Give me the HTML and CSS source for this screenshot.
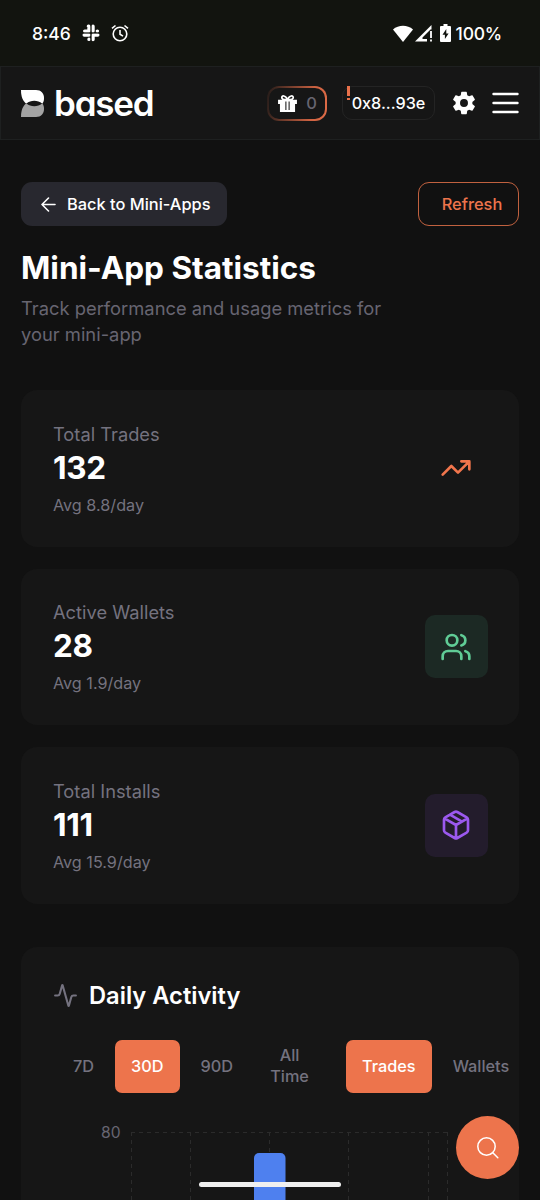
FILE: index.html
```html
<!DOCTYPE html>
<html lang="en">

<head>
    <meta charset="UTF-8">
    <meta name="viewport" content="width=device-width, initial-scale=1.0">
    <title>Mini-App Statistics</title>
    <link rel="stylesheet" href="styles.css">
</head>

<body>
    <div class="status-bar">
        <span class="time">8:46</span>
        <svg class="slack" width="18" height="18" viewBox="0 0 18 18" fill="none" stroke="#fff" stroke-width="3.4" stroke-linecap="round">
            <path d="M7 2.7v4.4M2.7 7.1H7M11 2.2v4.9M15.3 7.1h.1M2.2 11H7M2.7 11H7M7 15.3v.1M11 11h4.8M11 11v4.6M6.4 2.2h.4" />
            <path d="M9 1v16M1 9h16" stroke="#12140f" stroke-width="1" />
        </svg>
        <svg class="alarm" width="18" height="18" viewBox="0 0 18 18" fill="none" stroke="#fff" stroke-width="1.6">
            <circle cx="9" cy="10" r="6.8" />
            <path d="M9 6v4.3l3 1.8M1 4.4L4.5 1.5M17 4.4l-3.500-2.900" />
        </svg>
        <div class="status-right">
            <svg width="20" height="17" viewBox="0 0 20 17" fill="#fff">
                <path d="M0 4.500C5.500-.5 14.500-.5 20 4.500L10 17z" />
            </svg>
            <svg width="18" height="17" viewBox="0 0 18 17">
                <path d="M0 16.500L16.500 0v4.500H15.500L7.500 12.500v1.500h4.500v2.500z" fill="#fff" />
                <path d="M16 6v7M16 14.600v2" stroke="#fff" stroke-width="1.800" />
            </svg>
            <svg class="battery" width="11" height="18" viewBox="0 0 11 18">
                <path d="M3.500 0h4v2H10q1 0 1 1v14q0 1-1 1H1q-1 0-1-1V3q0-1 1-1h2.500z" fill="#fff" />
                <path d="M6.300 5L2.500 10.800h2.400V15l3.700-5.600H6.300z" fill="#12140f" />
            </svg>
            <span class="percent">100%</span>
        </div>
    </div>

    <header class="header">
        <div class="logo">
            <svg width="23" height="27" viewBox="0 0 23 27">
                <path d="M0 0H15C20 0 23 3.500 23 8C23 10.500 22.500 12 21.500 13.500H5C2 11 0 7 0 0z" fill="#fff" />
                <path d="M5 13.500H21.500C22.500 15 23 16.500 23 19C23 23.500 20 27 15 27H0C0 20 2 16 5 13.500z" fill="#a3a3a3" />
                <path d="M5.500 13.500C9.500 9.800 17 9.800 21 13.500C17 17 9.500 17 5.500 13.500z" fill="#161616" />
            </svg>
            <span>based</span>
        </div>
        <div class="header-right">
            <div class="gift">
                <svg width="19" height="17" viewBox="0 0 20 18">
                    <path d="M0 5h20v4.500H0zM2 9h16v9H2z" fill="#fff" />
                    <path d="M10 5C8 0 3.500 0 4 3.200Q4.500 5 7 5zM10 5C12 0 16.500 0 16 3.200Q15.500 5 13 5z" fill="none" stroke="#fff" stroke-width="1.800" />
                    <path d="M8.300 7v9M11.700 7v9" stroke="#161616" stroke-width="1.100" />
                </svg>
                <span>0</span>
            </div>
            <div class="wallet">
                <span class="alert"></span>
                <span>0x8...93e</span>
            </div>
            <svg class="gear" width="28" height="28" viewBox="0 0 24 24" fill="#fff">
                <path d="M19.140 12.940c.04-.3.06-.61.06-.94s-.02-.64-.07-.94l2.030-1.580c.18-.14.23-.41.12-.61l-1.920-3.320c-.12-.22-.37-.29-.59-.22l-2.390.96c-.5-.38-1.030-.7-1.620-.94l-.36-2.540c-.04-.24-.24-.41-.48-.41h-3.840c-.24 0-.43.17-.47.41l-.36 2.540c-.59.24-1.130.57-1.620.94l-2.390-.96c-.22-.08-.47 0-.59.22L2.740 8.870c-.12.21-.08.47.12.61l2.030 1.580c-.05.3-.09.63-.09.94s.02.64.07.94l-2.030 1.580c-.18.14-.23.41-.12.61l1.920 3.320c.12.22.37.29.59.22l2.390-.96c.5.38 1.030.7 1.620.94l.36 2.540c.05.24.24.41.48.41h3.840c.24 0 .44-.17.47-.41l.36-2.540c.59-.24 1.130-.56 1.620-.94l2.390.96c.22.08.47 0 .59-.22l1.920-3.320c.12-.22.07-.47-.12-.61zM12 15.400a3.400 3.400 0 1 1 0-6.800 3.400 3.400 0 0 1 0 6.800z" />
            </svg>
            <svg class="menu" width="27" height="22" viewBox="0 0 27 22" stroke="#fff" stroke-width="2.400" stroke-linecap="round">
                <path d="M1.500 2h24M1.500 11h24M1.500 20h24" />
            </svg>
        </div>
    </header>

    <main>
        <div class="actions">
            <button class="back">
                <svg width="15" height="15" viewBox="0 0 15 15" fill="none" stroke="#fff" stroke-width="1.600" stroke-linecap="round" stroke-linejoin="round">
                    <path d="M7.500 1L1 7.500l6.500 6.500M1 7.500h13" />
                </svg>
                <span>Back to Mini-Apps</span>
            </button>
            <button class="refresh">Refresh</button>
        </div>
        <h1>Mini-App Statistics</h1>
        <p class="subtitle">Track performance and usage metrics for your mini-app</p>

        <div class="stats">
            <div class="card">
                <div>
                    <div class="label">Total Trades</div>
                    <div class="value">132</div>
                    <div class="avg">Avg 8.8/day</div>
                </div>
                <div class="icon trades">
                    <svg width="32" height="32" viewBox="0 0 24 24">
                        <path d="M22 7l-8.500 8.500-5-5L2 17M16 7h6v6" />
                    </svg>
                </div>
            </div>
            <div class="card">
                <div>
                    <div class="label">Active Wallets</div>
                    <div class="value">28</div>
                    <div class="avg">Avg 1.9/day</div>
                </div>
                <div class="icon wallets">
                    <svg width="32" height="32" viewBox="0 0 24 24">
                        <path d="M16 21v-2a4 4 0 0 0-4-4H6a4 4 0 0 0-4 4v2M22 21v-2a4 4 0 0 0-3-3.870M16 3.130a4 4 0 0 1 0 7.750" />
                        <circle cx="9" cy="7" r="4" />
                    </svg>
                </div>
            </div>
            <div class="card">
                <div>
                    <div class="label">Total Installs</div>
                    <div class="value">111</div>
                    <div class="avg">Avg 15.9/day</div>
                </div>
                <div class="icon installs">
                    <svg width="32" height="32" viewBox="0 0 24 24">
                        <path d="M11 21.730a2 2 0 0 0 2 0l7-4A2 2 0 0 0 21 16V8a2 2 0 0 0-1-1.730l-7-4a2 2 0 0 0-2 0l-7 4A2 2 0 0 0 3 8v8a2 2 0 0 0 1 1.730zM12 22V12M3.300 7L12 12l8.700-5M7.500 4.270l9 5.150" />
                    </svg>
                </div>
            </div>
        </div>

        <section class="activity">
            <h2>
                <svg width="25" height="25" viewBox="0 0 24 24" fill="none" stroke="#74727f" stroke-width="2" stroke-linecap="round" stroke-linejoin="round">
                    <path d="M22 12h-2.480a2 2 0 0 0-1.930 1.460l-2.350 8.360a.25.25 0 0 1-.48 0L9.240 2.180a.25.25 0 0 0-.48 0l-2.350 8.360A2 2 0 0 1 4.490 12H2" />
                </svg>
                <span>Daily Activity</span>
            </h2>
            <div class="filters">
                <div class="group">
                    <button>7D</button>
                    <button class="active">30D</button>
                    <button>90D</button>
                    <button class="all">All Time</button>
                </div>
                <div class="group">
                    <button class="active">Trades</button>
                    <button>Wallets</button>
                </div>
            </div>
            <div class="chart">
                <span class="tick">80</span>
                <svg width="320" height="69" viewBox="0 0 320 69">
                    <path class="grid" d="M1 1.500h317M1.500 1v68M60.500 1v68M139.500 1v68M218.500 1v68M298.500 1v68M317.500 1v68" />
                    <rect x="124" y="22" width="31.500" height="60" rx="5" fill="#4e80ef" />
                </svg>
            </div>
        </section>
    </main>

    <button class="search">
        <svg width="24" height="24" viewBox="0 0 24 24" fill="none" stroke="#fff" stroke-width="1.500" stroke-linecap="round">
            <circle cx="10.500" cy="10.500" r="8.700" />
            <path d="M16.800 16.800l5 5" />
        </svg>
    </button>
    <div class="home-bar"></div>
</body>

</html>
```
FILE: styles.css
```css
* {
    box-sizing: border-box;
}

body {
    margin: 0;
    height: 1200px;
    overflow: hidden;
    position: relative;
    background-color: #111111;
    color: #fff;
    font-family: Inter, "Liberation Sans", sans-serif;
}

svg {
    display: block;
    flex-shrink: 0;
}

button {
    border: 0;
    padding: 0;
    background: none;
    color: inherit;
    font-family: inherit;
}

.status-bar {
    display: flex;
    align-items: center;
    height: 66px;
    padding: 0 38px 0 32px;
    background-color: #12140f;
    font-size: 17.500px;
    font-weight: 500;
}

.time {
    width: 38px;
    white-space: nowrap;
}

.slack {
    margin-left: 12px;
}

.alarm {
    margin-left: 11px;
}

.status-right {
    display: flex;
    align-items: center;
    margin-left: auto;
}

.status-right svg {
    margin-right: 2px;
}

.status-right .battery {
    margin: 0 5px 0 5px;
}

.percent {
    letter-spacing: -0.2px;
}

.header {
    display: flex;
    align-items: center;
    justify-content: space-between;
    height: 74px;
    padding: 0 20px;
    background-color: #161616;
    border: 1px solid #1e2020;
}

.logo {
    display: flex;
    align-items: center;
    gap: 10px;
}

.logo span {
    font-size: 35px;
    font-weight: 600;
    line-height: 40px;
    letter-spacing: -1.200px;
    font-feature-settings: "cv11";
}

.header-right {
    display: flex;
    align-items: center;
}

.gift {
    display: flex;
    align-items: center;
    justify-content: space-between;
    width: 60px;
    height: 35px;
    padding: 0 8px 0 9px;
    border: 2px solid transparent;
    border-radius: 12px;
    background: linear-gradient(#161616, #161616) padding-box, linear-gradient(100deg, #161616 -5%, #cf6342 75%, #e06c47) border-box;
    color: #676571;
    font-size: 16.500px;
    font-weight: 500;
}

.wallet {
    position: relative;
    width: 93px;
    height: 34px;
    margin-left: 15px;
    border: 1px solid #242424;
    border-radius: 10px;
    font-size: 16.200px;
    font-weight: 500;
    line-height: 32px;
    text-align: center;
}

.alert {
    position: absolute;
    left: 4px;
    top: -1px;
    width: 3px;
    height: 14px;
    background: linear-gradient(#e8704a 10px, #161616 10px 12px, #e8704a 12px);
}

.gear {
    margin-left: 15px;
}

.menu {
    margin-left: 14px;
}

main {
    padding: 42px 21px 0;
}

.actions {
    display: flex;
    justify-content: space-between;
}

.back,
.refresh {
    height: 44px;
    border-radius: 11px;
    font-size: 16.400px;
    font-weight: 500;
}

.back {
    display: flex;
    align-items: center;
    gap: 11px;
    width: 206px;
    padding-left: 20px;
    background-color: #28282f;
}

.refresh {
    width: 101px;
    padding-left: 7px;
    border: 1px solid #c1613f;
    color: #ed744c;
}

h1 {
    margin: 20px 0 0;
    font-size: 31.500px;
    font-weight: 700;
    line-height: 44px;
}

.subtitle {
    width: 400px;
    margin: 5px 0 0;
    color: #676571;
    font-size: 18.350px;
    line-height: 26px;
}

.stats {
    display: grid;
    gap: 22px;
    margin-top: 43px;
}

.card {
    display: flex;
    align-items: center;
    justify-content: space-between;
    height: 156.500px;
    padding: 0 31.500px 0 32px;
    background-color: #161616;
    border-radius: 16px;
}

.label {
    color: #74727f;
    font-size: 18.300px;
    line-height: 26px;
}

.value {
    font-size: 31.500px;
    font-weight: 700;
    line-height: 42px;
    letter-spacing: -0.3px;
}

.avg {
    margin-top: 6px;
    color: #74727f;
    font-size: 16.200px;
    line-height: 21px;
}

.icon {
    display: flex;
    align-items: center;
    justify-content: center;
    width: 63px;
    height: 63px;
    border-radius: 10px;
}

.icon svg {
    fill: none;
    stroke: currentColor;
    stroke-width: 2;
    stroke-linecap: round;
    stroke-linejoin: round;
}

.trades {
    color: #f1754c;
}

.wallets {
    background-color: #1c2924;
    color: #60cc96;
}

.installs {
    background-color: #231c2c;
    color: #9b59ee;
}

.activity {
    height: 254px;
    margin-top: 43px;
    padding: 32px;
    background-color: #161616;
    border-radius: 16px 16px 0 0;
}

h2 {
    display: flex;
    align-items: center;
    gap: 11px;
    margin: 0;
    font-size: 23.700px;
    font-weight: 600;
    line-height: 34px;
}

.filters {
    display: flex;
    gap: 11px;
    margin-top: 22px;
}

.group {
    display: flex;
    flex-shrink: 0;
    gap: 5px;
    padding: 5px;
}

.group:first-child {
    padding-left: 4px;
}

.group button {
    height: 53px;
    padding: 0 16px;
    border-radius: 7px;
    color: #74727f;
    font-size: 16.300px;
    font-weight: 500;
    line-height: 21px;
}

.group .active {
    background-color: #ed744c;
    color: #fff;
}

.group .all {
    width: 71px;
}

.chart {
    display: flex;
    gap: 9px;
    margin-top: 33px;
    padding-left: 48px;
}

.tick {
    margin-top: -8px;
    color: #676571;
    font-size: 15.700px;
    line-height: 19px;
}

.grid {
    fill: none;
    stroke: #2b2b2b;
    stroke-dasharray: 4 4;
}

.search {
    position: absolute;
    left: 456px;
    top: 1116px;
    display: flex;
    align-items: center;
    justify-content: center;
    width: 63px;
    height: 63px;
    border-radius: 50%;
    background-color: #ed744c;
}

.home-bar {
    position: absolute;
    left: 199px;
    top: 1182px;
    width: 142px;
    height: 5px;
    border-radius: 3px;
    background-color: #efefef;
}
```
